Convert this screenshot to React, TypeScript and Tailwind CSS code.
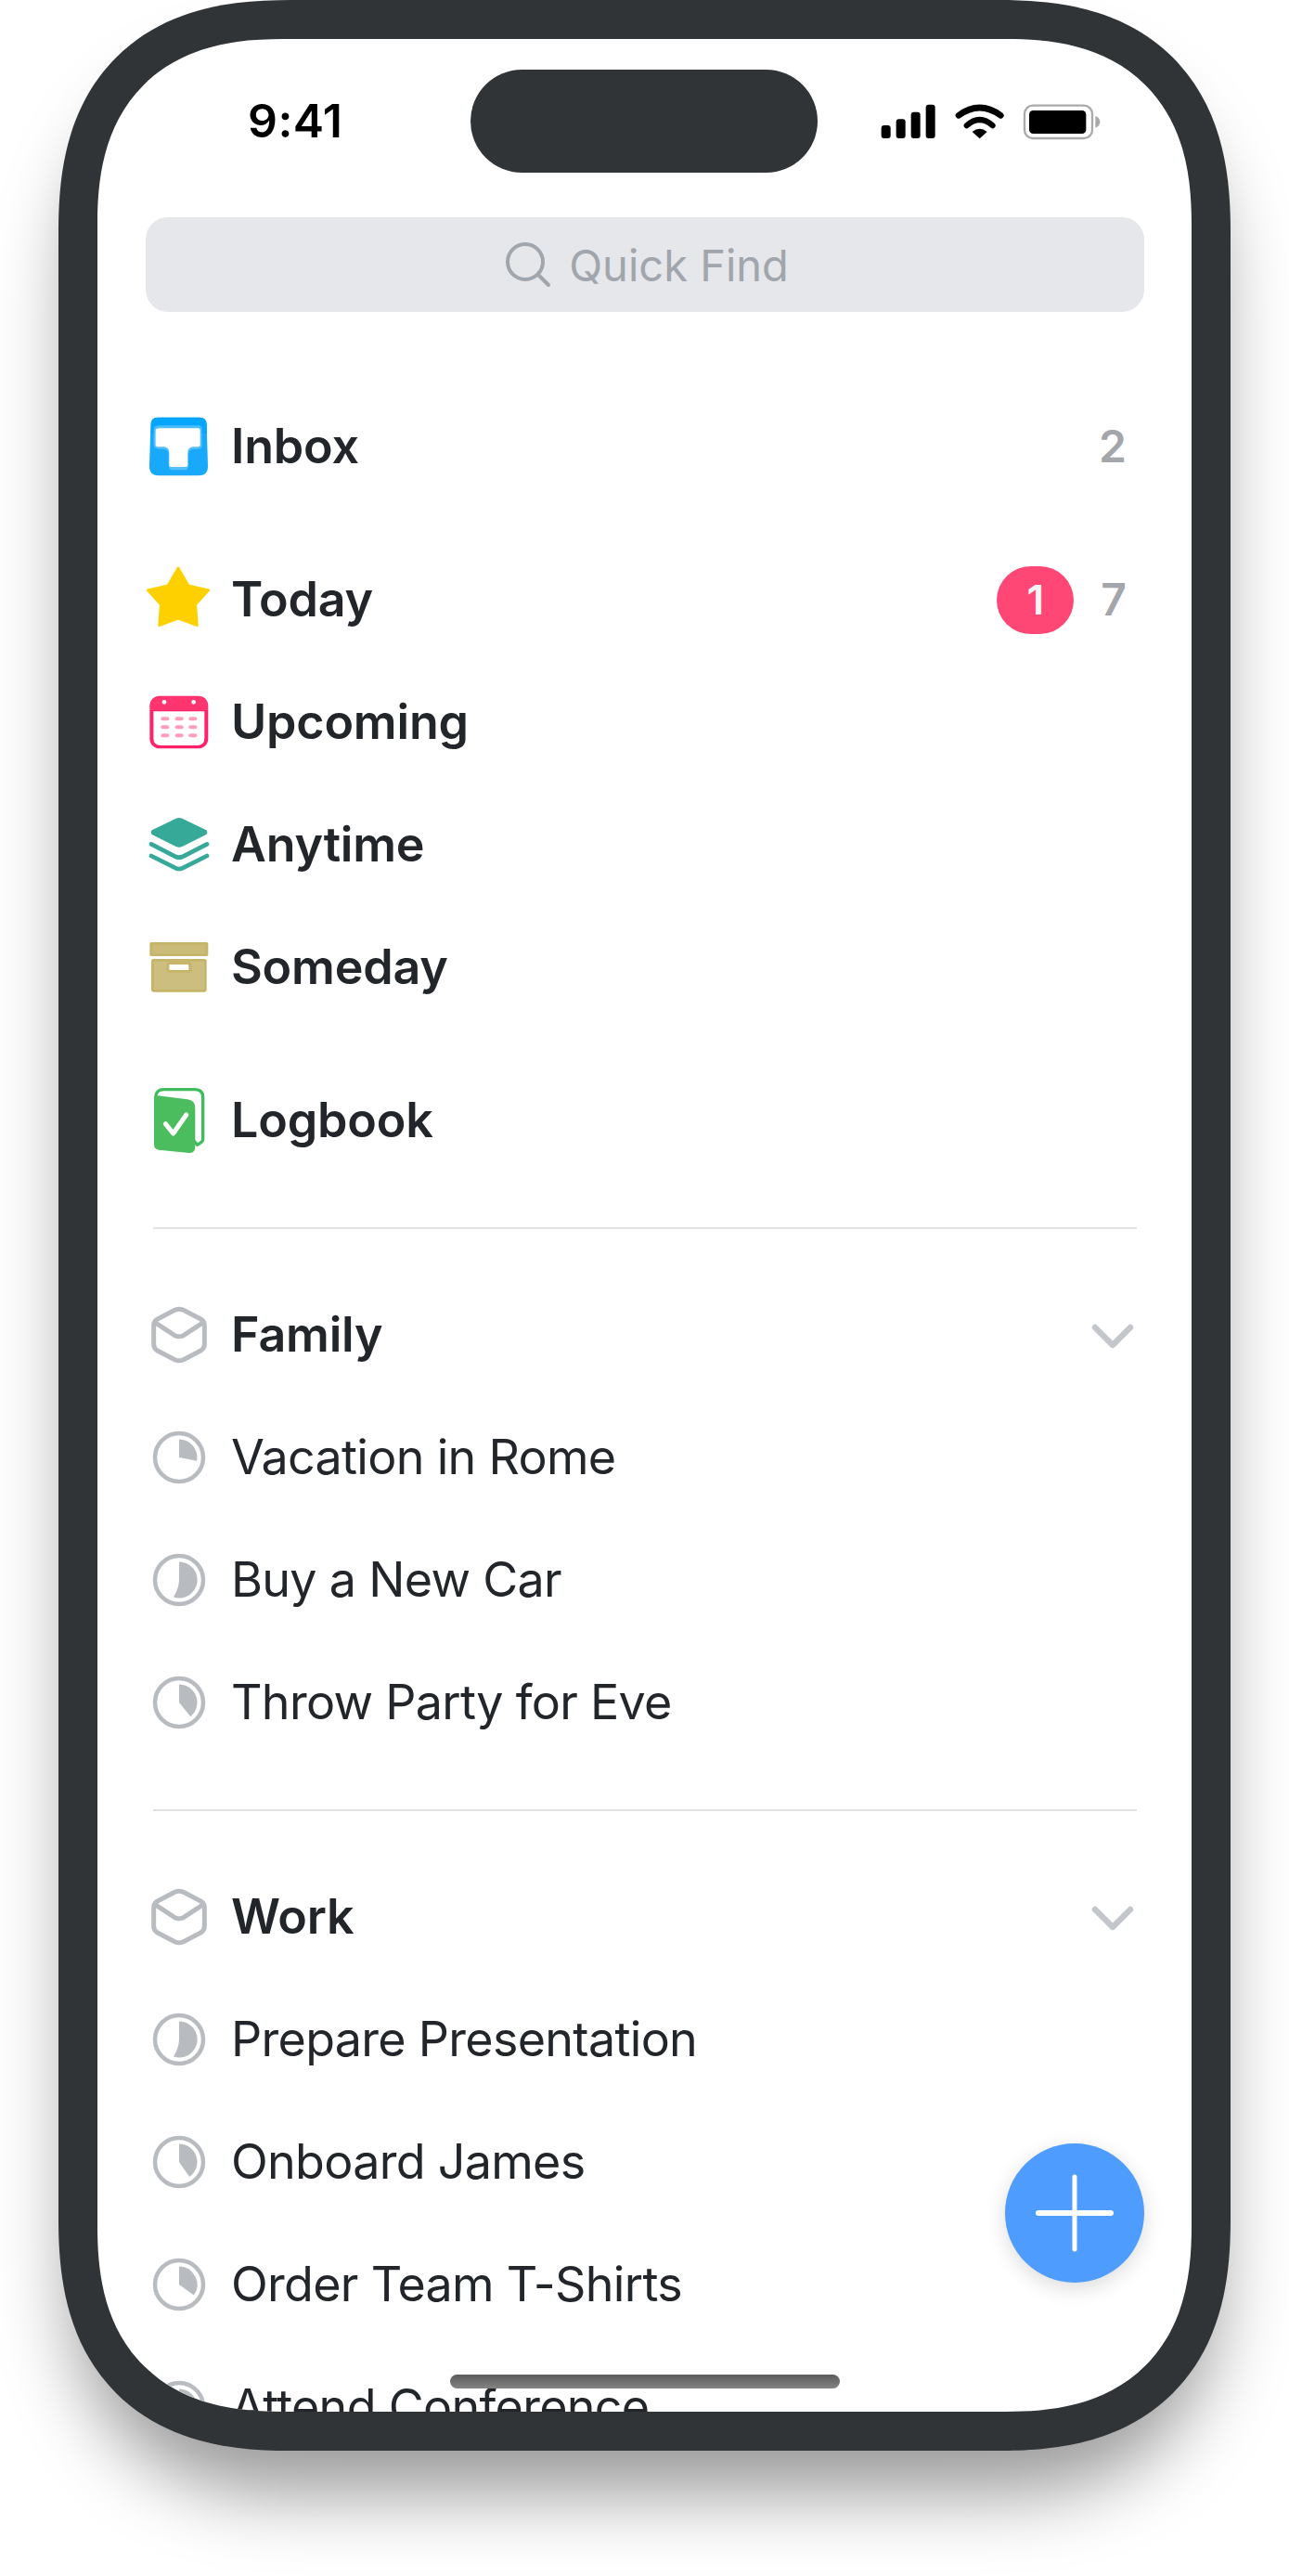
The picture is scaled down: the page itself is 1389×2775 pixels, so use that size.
const FONT = "font-['Inter','Noto_Sans',sans-serif]";

const InboxIcon = () => (
  <svg className="mt-[2px]" width="66" height="66" viewBox="93 88 198 198">
    <path d="M122 90 h136 q22 0 23 22 l4 136 q0 30 -30 30 h-129 q-30 0 -30 -30 l4 -136 q1 -22 22 -22 z" fill="#18a9fb" />
    <path d="M122 90 h136 q22 0 23 22 l1 30 h-180 l1 -30 q1 -22 19 -22 z" fill="#04a6ff" />
    <path d="M128 116 h126 q12 0 12 12 v52 q0 12 -12 12 h-14 q-18 0 -18 18 v36 q0 14 -14 14 h-36 q-14 0 -14 -14 v-36 q0 -18 -18 -18 h-12 q-18 0 -18 -14 v-50 q0 -12 18 -12 z" fill="#9fd9fb" opacity="0.45" />
    <path d="M126 125 h128 q6 0 6 6 v48 q0 6 -6 6 h-16 q-18 0 -18 20 v38 q0 7 -7 7 h-46 q-7 0 -7 -7 v-38 q0 -20 -18 -20 h-16 q-10 0 -10 -6 v-48 q0 -6 14 -6 z" fill="#ffffff" />
  </svg>
);

const StarIcon = () => (
  <svg className="mb-[6px] mr-[2px]" width="72" height="68" viewBox="78 568 216 204">
    <path
      d="M186 574 L220 632 L287 648 L244 695 L249 765 L186 742 L123 765 L128 695 L85 648 L152 632 Z"
      fill="#ffd000"
      stroke="#ffd000"
      strokeWidth="8"
      strokeLinejoin="round"
    />
  </svg>
);

const CalendarIcon = () => (
  <svg width="64" height="58" viewBox="95 988 192 174">
    <rect x="96" y="990" width="189" height="170" rx="32" fill="#ff2268" />
    <path d="M98 1036 v-14 q0 -30 30 -30 h125 q30 0 30 30 v14 z" fill="#ff3570" />
    <path d="M108 1040 h165 v86 q0 24 -24 24 h-117 q-24 0 -24 -24 z" fill="#ffffff" />
    <circle cx="143" cy="1010" r="7" fill="#ffffff" />
    <circle cx="238" cy="1010" r="7" fill="#ffffff" />
    {[1058, 1085, 1112].map((y) =>
      [132, 178, 222].map((x) => (
        <rect key={`${x}-${y}`} x={x} y={y} width="27" height="12" rx="6" fill="#ff9dba" />
      ))
    )}
  </svg>
);

const AnytimeIcon = () => (
  <svg className="mb-[2px]" width="66" height="60" viewBox="57 55 198 180">
    <path
      d="M146 63 q10 -4 20 0 l78 38 q6 7 0 14 l-78 39 q-10 4 -20 0 l-78 -39 q-6 -7 0 -14 z"
      fill="#36a999"
    />
    <path d="M66 146 L146 187 q10 4 20 0 L246 146" fill="none" stroke="#36a999" strokeWidth="14" strokeLinecap="round" />
    <path d="M66 184 L146 224 q10 4 20 0 L246 184" fill="none" stroke="#36a999" strokeWidth="14" strokeLinecap="round" />
  </svg>
);

const SomedayIcon = () => (
  <svg width="64" height="56" viewBox="95 160 192 166">
    <rect x="96" y="162" width="189" height="45" rx="5" fill="#c6b568" />
    <rect x="105" y="170" width="171" height="29" fill="#cabb78" />
    <rect x="101" y="216" width="179" height="107" rx="7" fill="#c6b568" />
    <rect x="109" y="224" width="163" height="91" fill="#ccbe7e" />
    <rect x="150" y="226" width="82" height="34" rx="10" fill="#c6b568" />
    <rect x="159" y="234" width="63" height="18" rx="3" fill="#ffffff" />
  </svg>
);

const LogbookIcon = () => (
  <svg width="56" height="72" viewBox="102 636 168 216">
    <path
      d="M110 668 q2 -24 26 -24 h102 q25 0 25 25 v136 q0 6 -6 10 l-12 8 z"
      fill="#ffffff"
      stroke="#3fbd5c"
      strokeWidth="10"
      strokeLinejoin="round"
    />
    <path
      d="M105 675 q0 -13 13 -11 l95 12 q25 3 25 28 v125 q0 22 -20 20 l-98 -10 q-15 -2 -15 -16 z"
      fill="#4bbd5f"
    />
    <path d="M142 755 L167 786 L209 726" fill="none" stroke="#ffffff" strokeWidth="15" strokeLinecap="round" strokeLinejoin="round" />
  </svg>
);

const BoxIcon = () => (
  <svg width="62" height="62" viewBox="93 73 186 186" fill="none" stroke="#b8bcc1" strokeWidth="15" strokeLinejoin="round" strokeLinecap="round">
    <path d="M172 86 q14 -7 28 0 l56 29 q12 7 12 20 v62 q0 13 -12 20 l-56 29 q-14 7 -28 0 l-56 -29 q-12 -7 -12 -20 v-62 q0 -13 12 -20 z" />
    <path d="M108 126 L172 168 q14 7 28 0 L264 126" />
  </svg>
);

const piePath = (deg: number) => {
  const r = 19.5;
  const a = (deg * Math.PI) / 180;
  const x = (r * Math.sin(a)).toFixed(2);
  const y = (-r * Math.cos(a)).toFixed(2);
  return `M0 0 L0 ${-r} A${r} ${r} 0 ${deg > 180 ? 1 : 0} 1 ${x} ${y} Z`;
};

// progress ring, the 198 ones have a curved inner edge in the picture
const Progress = ({ deg }: { deg: number }) => (
  <svg width="60" height="60" viewBox="-30 -30 60 60">
    <circle r="26" fill="none" stroke="#b8bcc1" strokeWidth="4.5" />
    {deg === 198 ? (
      <path d="M0 -19.5 A19.5 19.5 0 1 1 -6 18.5 Q0 8 0 0 Z" fill="#b8bcc1" />
    ) : (
      <path d={piePath(deg)} fill="#b8bcc1" />
    )}
  </svg>
);

const Row = ({
  icon,
  label,
  bold,
  children,
}: {
  icon: React.ReactNode;
  label: string;
  bold?: boolean;
  children?: React.ReactNode;
}) => (
  <div className="flex h-[132px] items-center">
    <div className="flex w-[72px] shrink-0 items-center justify-center">{icon}</div>
    <span
      className={`ml-[20px] text-[52px] leading-none text-[#22262a] ${
        bold ? "font-semibold tracking-[-0.2px]" : "font-normal tracking-[-0.7px]"
      }`}
    >
      {label}
    </span>
    {children}
  </div>
);

const Count = ({ value }: { value: string }) => (
  <span className="ml-auto mr-[19px] text-[48px] font-semibold leading-none text-[#a3a6aa]">{value}</span>
);

const Chevron = () => (
  <svg className="ml-auto mr-[10px] mt-[5px]" width="48" height="32" viewBox="0 0 48 32" fill="none">
    <path d="M5 5 L24 24 L43 5" stroke="#c3c6cb" strokeWidth="6.5" strokeLinecap="round" strokeLinejoin="round" />
  </svg>
);

const Divider = () => <div className="ml-[8px] mr-[8px] h-[2px] bg-[#dfe1e3]" />;

const StatusIcons = () => (
  <svg width="240" height="42" viewBox="85 60 720 126">
    <rect x="90" y="135" width="30" height="42" rx="9" />
    <rect x="138" y="115" width="30" height="62" rx="9" />
    <rect x="186" y="92" width="30" height="85" rx="9" />
    <rect x="234" y="68" width="30" height="109" rx="9" />
    <path d="M340 103 Q408 53 476 103" fill="none" stroke="#000" strokeWidth="20" strokeLinecap="round" />
    <path d="M366 136 Q408 98 450 136" fill="none" stroke="#000" strokeWidth="18" strokeLinecap="round" />
    <path d="M384 156 Q408 136 432 156 L408 178 Z" fill="#000" />
    <rect x="553" y="71" width="219" height="106" rx="27" fill="none" stroke="#aaaaaa" strokeWidth="7" />
    <rect x="568" y="87" width="184" height="75" rx="13" />
    <path d="M782 105 q15 5 15 19 t-15 19 z" fill="#aaaaaa" />
  </svg>
);

const App = () => {
  return (
    <div className={`h-[2775px] overflow-hidden bg-white ${FONT}`}>
      <div className="mx-auto h-[2640px] w-[1263px] rounded-[250px] bg-[#303437] p-[42px] shadow-[0_60px_80px_-14px_rgba(0,0,0,0.4)] [corner-shape:superellipse(1.28)]">
        <div className="relative h-full overflow-hidden rounded-[200px] bg-white [corner-shape:superellipse(1.28)]">
          {/* status bar */}
          <div className="flex h-[192px] items-start">
            <div className="w-[402px] pl-[162px] pt-[58px] text-[50px] font-semibold leading-[60px] tracking-[0.4px] text-black">9:41</div>
            <div className="mt-[33px] h-[111px] w-[374px] rounded-full bg-[#303437]" />
            <div className="pl-[67px] pt-[68px]">
              <StatusIcons />
            </div>
          </div>

          <div className="pl-[52px] pr-[51px]">
            {/* search */}
            <div className="flex h-[102px] items-center justify-center gap-[19px] rounded-[24px] bg-[#e5e7ea] pl-[4px]">
              <svg width="50" height="50" viewBox="0 0 50 50" fill="none" stroke="#a1a6ac" strokeWidth="4" strokeLinecap="round">
                <circle cx="22" cy="22" r="19" />
                <path d="M36 36 L47 47" />
              </svg>
              <span className="text-[47px] leading-none text-[#a1a6ac]">Quick Find</span>
            </div>

            <div className="mt-[79px]">
              <Row icon={<InboxIcon />} label="Inbox" bold>
                <Count value="2" />
              </Row>
            </div>

            <div className="mt-[33px]">
              <Row icon={<StarIcon />} label="Today" bold>
                <div className="ml-auto flex h-[73px] w-[83px] items-center justify-center rounded-full bg-[#ff4775] text-[44px] font-semibold leading-none text-[#f5f5f7]">
                  1
                </div>
                <span className="ml-[29px] mr-[19px] text-[48px] font-semibold leading-none text-[#a3a6aa]">7</span>
              </Row>
              <Row icon={<CalendarIcon />} label="Upcoming" bold />
              <Row icon={<AnytimeIcon />} label="Anytime" bold />
              <Row icon={<SomedayIcon />} label="Someday" bold />
            </div>

            <div className="mt-[33px]">
              <Row icon={<LogbookIcon />} label="Logbook" bold />
            </div>

            <div className="mb-[48px] mt-[49px]">
              <Divider />
            </div>

            <Row icon={<BoxIcon />} label="Family" bold>
              <Chevron />
            </Row>
            <Row icon={<Progress deg={101} />} label="Vacation in Rome" />
            <Row icon={<Progress deg={198} />} label="Buy a New Car" />
            <Row icon={<Progress deg={141} />} label="Throw Party for Eve" />

            <div className="mb-[48px] mt-[49px]">
              <Divider />
            </div>

            <Row icon={<BoxIcon />} label="Work" bold>
              <Chevron />
            </Row>
            <Row icon={<Progress deg={198} />} label="Prepare Presentation" />
            <Row icon={<Progress deg={145} />} label="Onboard James" />
            <Row icon={<Progress deg={126} />} label="Order Team T-Shirts" />
            <Row icon={<Progress deg={145} />} label="Attend Conference" />
          </div>

          {/* floating add button */}
          <div className="absolute bottom-[139px] right-[51px] flex h-[150px] w-[150px] items-center justify-center rounded-full bg-[#4f9cff] shadow-[0_6px_22px_rgba(0,0,0,0.14)]">
            <svg width="84" height="84" viewBox="0 0 84 84" stroke="#ffffff" strokeLinecap="round">
              <path d="M3 42 H81" strokeWidth="6" />
              <path d="M42 3 V81" strokeWidth="5" />
            </svg>
          </div>

          {/* home indicator */}
          <div className="absolute bottom-[25px] left-[380px] h-[15px] w-[420px] rounded-full bg-gradient-to-b from-[#5c5c5c] to-[#838383]" />
        </div>
      </div>
    </div>
  );
};

export default App;
